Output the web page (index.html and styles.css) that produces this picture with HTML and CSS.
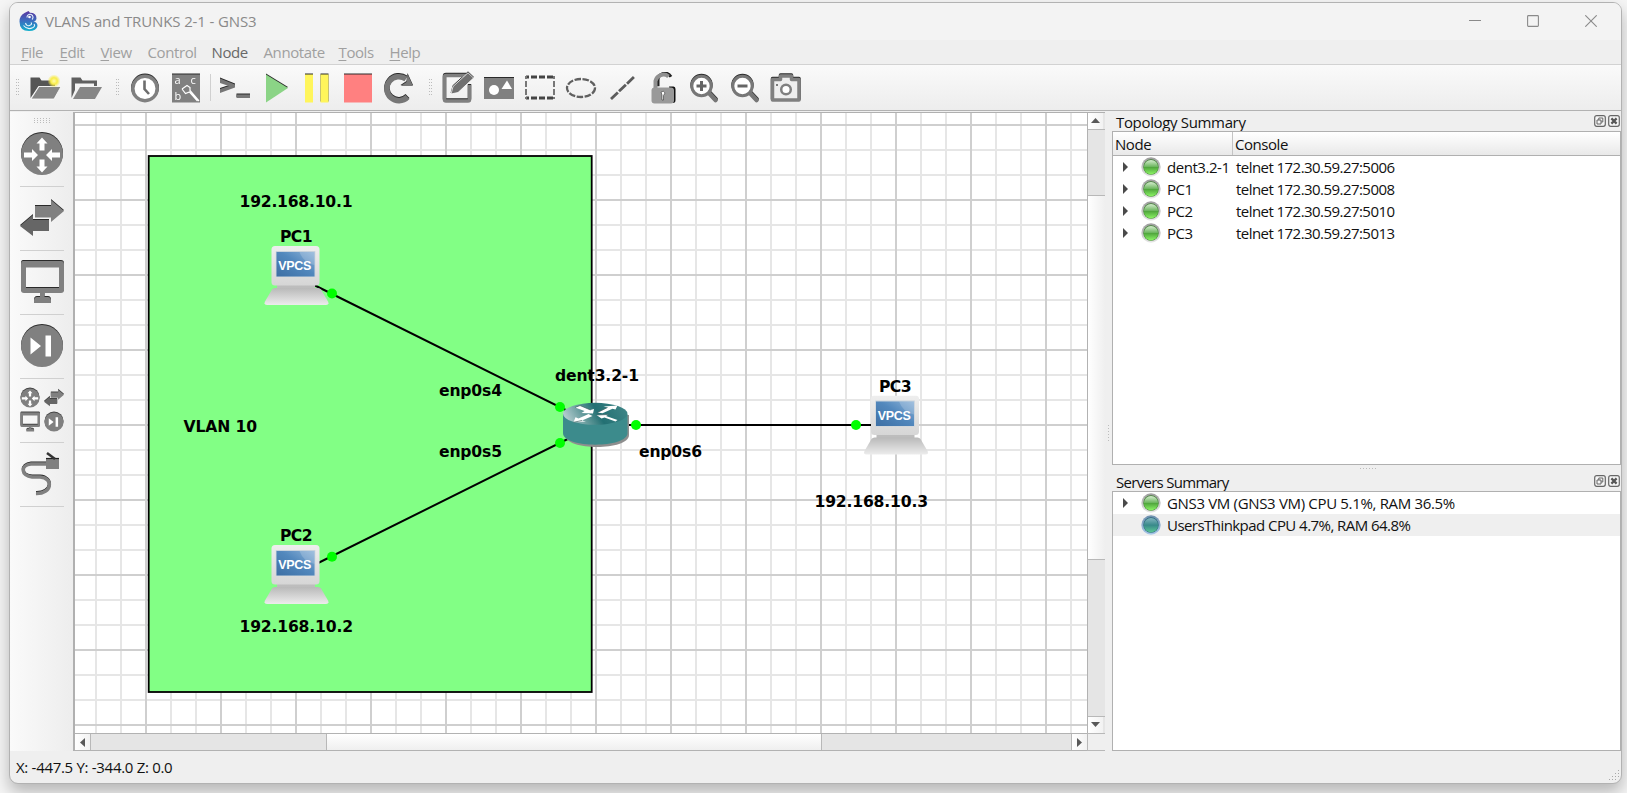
FILE: index.html
```html
<!DOCTYPE html>
<html lang="en">
<head>
<meta charset="utf-8">
<title>VLANS and TRUNKS 2-1 - GNS3</title>
<link rel="stylesheet" href="styles.css">
</head>
<body>
<svg class="defs" aria-hidden="true">
  <defs>
    <linearGradient id="case" x1="0" y1="0" x2="0" y2="1"><stop offset="0" stop-color="#eeeeee"/><stop offset="1" stop-color="#d6d6d6"/></linearGradient>
    <linearGradient id="base" x1="0" y1="0" x2="0" y2="1"><stop offset="0" stop-color="#b9b9b9"/><stop offset="1" stop-color="#ececec"/></linearGradient>
    <linearGradient id="screen" x1="0" y1="1" x2="1" y2="0"><stop offset="0" stop-color="#3d6fa4"/><stop offset=".55" stop-color="#5288bd"/><stop offset="1" stop-color="#8db3d8"/></linearGradient>
    <linearGradient id="lid" x1="0" y1=".6" x2="1" y2=".4"><stop offset="0" stop-color="#b9cfd2"/><stop offset=".4" stop-color="#4c8b8c"/><stop offset=".55" stop-color="#237073"/><stop offset="1" stop-color="#3e8486"/></linearGradient>
    <linearGradient id="green" x1="0" y1="0" x2="0" y2="1"><stop offset="0" stop-color="#d4ecce"/><stop offset=".45" stop-color="#70b862"/><stop offset=".5" stop-color="#4fa53c"/><stop offset="1" stop-color="#8df566"/></linearGradient>
    <linearGradient id="teal" x1="0" y1="0" x2="0" y2="1"><stop offset="0" stop-color="#83b5c0"/><stop offset=".5" stop-color="#38898a"/><stop offset="1" stop-color="#5cc795"/></linearGradient>
    <linearGradient id="ring" x1="0" y1="0" x2="0" y2="1"><stop offset="0" stop-color="#9c9c9c"/><stop offset="1" stop-color="#e9e9e9"/></linearGradient>
    <linearGradient id="bluering" x1="0" y1="0" x2="0" y2="1"><stop offset="0" stop-color="#6f90ae"/><stop offset="1" stop-color="#a8c8ea"/></linearGradient>
    <linearGradient id="logo" x1="0" y1="0" x2="0" y2="1"><stop offset="0" stop-color="#5b35a0"/><stop offset=".5" stop-color="#3b6fc0"/><stop offset="1" stop-color="#12b0cc"/></linearGradient>
    <radialGradient id="glow"><stop offset="0" stop-color="#fffbb0"/><stop offset=".5" stop-color="#f8ec48"/><stop offset="1" stop-color="#f8ec48" stop-opacity="0"/></radialGradient>
    <symbol id="s-router" viewBox="0 0 44 44"><circle cx="22" cy="22" r="21" fill="#808080"/><path fill="#fff" d="M22 5.500l5.500 6h-3v7h-5v-7h-3zM22 40.500l5.500-6h-3v-7h-5v7h-3zM18 23l-6-6v3.500H4v5h8V29zM26 23l6-6v3.500h8v5h-8V29z"/></symbol>
    <symbol id="s-switch" viewBox="0 0 44 44"><path fill="#808080" d="M15 10h16V4l13 11-13 11v-4.500H15z"/><path fill="#666" d="M29 24H13v-5L0 30l13 10v-5h16z"/></symbol>
    <symbol id="s-host" viewBox="0 0 44 44"><path fill="#808080" fill-rule="evenodd" d="M3 1h38q3 0 3 3v26q0 3-3 3H24.500v4H28q3 0 3 3.500V43H14v-2.500q0-3.500 3-3.500h3v-4H4q-3 0-3-3V4q0-3 2-3zM6 7.500V28h33V7.500z"/></symbol>
    <symbol id="s-next" viewBox="0 0 44 44"><circle cx="22" cy="22" r="21" fill="#808080"/><path fill="#fff" d="M10.500 13.500L21 22l-10.500 8.500zM25.500 11.500H31v21h-5.500z"/></symbol>
    <symbol id="s-pc" viewBox="0 0 66 60">
      <path d="M13 38h38v6H13z" fill="#bdbdbd"/>
      <path d="M11 42h43q2 0 3 1.500l7 12q1.500 3.500-2 3.500H3q-3.500 0-2-3.500l7-12q1-1.500 3-1.500z" fill="url(#base)"/>
      <rect x="7.500" y="0" width="48" height="39.500" rx="3.500" fill="url(#case)"/>
      <rect x="11.800" y="5" width="39.500" height="26" fill="#c9d3dc"/>
      <rect x="12.500" y="6" width="38" height="24.500" fill="url(#screen)"/>
      <path d="M35.500 6h15v13q-11-2-15-13z" fill="#fff" opacity=".18"/>
      <text class="vpcs" x="14.300" y="24" textLength="33">VPCS</text>
    </symbol>
    <symbol id="s-float" viewBox="0 0 12 12"><rect x=".7" y=".7" width="10.600" height="10.600" rx="2" fill="#f5f5f5" stroke="#666" stroke-width="1.200"/><path d="M4.800 5V3h4v4H7M3 5h4v4H3z" fill="none" stroke="#666"/></symbol>
    <symbol id="s-close" viewBox="0 0 12 12"><rect x=".7" y=".7" width="10.600" height="10.600" rx="2" fill="#f5f5f5" stroke="#666" stroke-width="1.200"/><path d="M3.400 3.400l5.200 5.200M8.600 3.400L3.400 8.600" stroke="#555" stroke-width="2.200"/></symbol>
    <symbol id="s-led" viewBox="0 0 20 20"><circle cx="10" cy="10" r="9.700" fill="url(#ring)"/><circle cx="10" cy="10" r="7.700" fill="#3d7d31"/><circle cx="10" cy="10.200" r="7.200" fill="url(#green)"/></symbol>
    <symbol id="s-led-blue" viewBox="0 0 20 20"><circle cx="10" cy="10" r="9.700" fill="url(#bluering)"/><circle cx="10" cy="10" r="7.700" fill="#266577"/><circle cx="10" cy="10.200" r="7.200" fill="url(#teal)"/></symbol>
    <pattern id="minor" x="95" y="124" width="25" height="25" patternUnits="userSpaceOnUse"><path d="M0 0h25v2H0zM0 0h2v25H0z" fill="#e6e6e6"/></pattern>
    <pattern id="major" x="145" y="124" width="75" height="75" patternUnits="userSpaceOnUse"><path d="M0 0h75v2H0zM0 0h2v75H0z" fill="#cfcfcf"/></pattern>
    <pattern id="dots-v" width="4" height="3" patternUnits="userSpaceOnUse"><path d="M0 0h1v1H0zM2 0h1v1H2z" fill="#bcbcbc"/></pattern>
    <pattern id="dots-h" width="3" height="2" patternUnits="userSpaceOnUse"><path d="M0 0h1v1H0z" fill="#bcbcbc"/></pattern>
  </defs>
</svg>

<div class="window">
  <header class="titlebar">
    <svg class="app-icon" viewBox="0 0 19 20"><path d="M9.500 0l1.500 1.800q6.500 0 6.500 5.700-.5 3-3 3 4 .5 4 4.500Q17.500 20 10 20 .5 20 .5 10.500q0-6 5-8.500z" fill="url(#logo)"/><path d="M8 6.500a3 3 0 1 1 5 2M6.500 12q1 3.500 4 2.500 3-1 1.500-3M4.500 14.500q4 5 9.500 2 2.500-1.500 1-3.500" fill="none" stroke="#e8f4fb" stroke-width="1.100"/><circle cx="10.500" cy="6" r="1.300" fill="#fff"/></svg>
    <span class="title">VLANS and TRUNKS 2-1 - GNS3</span>
    <div class="caption">
      <svg viewBox="0 0 12 12"><path d="M0 5.500h12"/></svg>
      <svg viewBox="0 0 12 12"><rect x=".6" y=".6" width="10.800" height="10.800" rx=".8"/></svg>
      <svg viewBox="0 0 12 12"><path d="M.3.300l11.400 11.400M11.700.3L.3 11.700"/></svg>
    </div>
  </header>
  <nav class="menubar">
    <span><u>F</u>ile</span><span><u>E</u>dit</span><span><u>V</u>iew</span><span>Control</span><span class="enabled">Node</span><span>Annotate</span><span><u>T</u>ools</span><span><u>H</u>elp</span>
  </nav>

  <div class="toolbar">
    <svg class="grip"><rect width="4" height="17" fill="url(#dots-v)"/></svg>
    <div class="group files">
      <svg viewBox="0 0 32 32"><path d="M1.500 26V5.500h9l2 3H26V14H9.500z" fill="#555"/><path d="M10 14.500h22L25 27H2z" fill="#868686" stroke="#fff" stroke-width=".8"/><circle cx="25" cy="9" r="6.500" fill="url(#glow)"/></svg>
      <svg viewBox="0 0 32 32"><path d="M1.500 26V5.500h9l2 3H27V14h-3v-2.500H5V18z" fill="#606060"/><path d="M10 15h22l-7 12H3z" fill="#868686"/></svg>
    </div>
    <svg class="grip"><rect width="4" height="17" fill="url(#dots-v)"/></svg>
    <div class="group">
      <svg class="bevel" viewBox="0 0 32 32"><circle cx="16" cy="16.500" r="12.200" fill="#fff" stroke="#808080" stroke-width="3.500"/><path d="M15.500 8.500V17l4.500 5" fill="none" stroke="#6d6d6d" stroke-width="2.600"/></svg>
      <svg class="bevel" viewBox="0 0 32 32"><rect x="2" y="2.500" width="28" height="28" fill="#808080"/><text class="letters" x="4.500" y="11.500">a</text><text class="letters" x="20.500" y="11.500">c</text><text class="letters" x="4.500" y="27.500">b</text><path d="M12 17l5-3.500 3 2v3l9 10.500M12 17l3.500 4.500 4-1.500 8 9" fill="none" stroke="#fff" stroke-width="1.200"/></svg>
    </div>
    <i class="rule"></i>
    <div class="group run">
      <svg class="bevel" viewBox="0 0 32 32"><path d="M1 6.500l15 6v3l-15 5.500v-4l9-3-9-3z" fill="#777"/><path d="M17.500 22.500H31v3.500H17.500z" fill="#777"/></svg>
      <svg class="bevel" viewBox="0 0 32 32"><path d="M6 2.500L28 16 6 30.500z" fill="#8bd486"/></svg>
      <svg class="bevel" viewBox="0 0 32 32"><path d="M4 2.500h8v28H4zM19.500 2.500h8v28h-8z" fill="#fff55b"/></svg>
      <svg class="bevel" viewBox="0 0 32 32"><path d="M2 2.500h28v28H2z" fill="#ff8080"/></svg>
      <svg class="bevel" viewBox="0 0 32 32"><path d="M24.500 25A12 12 0 1 1 23 7" fill="none" stroke="#777" stroke-width="5.500"/><path d="M24.500 2l5.500 12H17.500l6-4z" fill="#777"/></svg>
    </div>
    <svg class="grip"><rect width="4" height="17" fill="url(#dots-v)"/></svg>
    <div class="group">
      <svg class="bevel" viewBox="0 0 32 32"><path d="M24 3.500H4Q2.500 3.500 2.500 5v22.500q0 1.500 1.500 1.500h22q1.500 0 1.500-1.500V13" fill="none" stroke="#808080" stroke-width="3.500"/><path d="M9 22l2-7.500L26 .800l5.500 5.200L16 20.500z" fill="#707070" stroke="#fff" stroke-width=".8"/></svg>
      <svg class="bevel" viewBox="0 0 32 32"><path d="M1 6h30v21H1z" fill="#808080"/><circle cx="11" cy="18" r="5" fill="#fff"/><path d="M24 8.500l5 8.500H18.500z" fill="#fff"/></svg>
      <svg viewBox="0 0 32 32"><path d="M2 5h28M2 26h28" stroke="#444" stroke-width="3" stroke-dasharray="6 2" stroke-dashoffset="3" fill="none"/><path d="M2 4v23M30 4v23" stroke="#777" stroke-width="2" stroke-dasharray="6 2" stroke-dashoffset="3" fill="none"/></svg>
      <svg viewBox="0 0 32 32"><ellipse cx="16" cy="16" rx="14" ry="9" fill="none" stroke="#606060" stroke-width="2.300" stroke-dasharray="6.500 1.500"/></svg>
      <svg viewBox="0 0 32 32"><path d="M5 27L28 5" stroke="#5c5c5c" stroke-width="2.800" stroke-dasharray="9.500 1.600"/></svg>
      <svg viewBox="0 0 32 32"><path d="M10 15V9a7 7 0 0 1 13-3.500" fill="none" stroke="#222" stroke-width="3" transform="translate(1 -.8)"/><path d="M8.500 17V9a8 8 0 0 1 13-4.500" fill="none" stroke="#909090" stroke-width="4"/><path d="M22 14.500h4.500q2 0 2 2.500v11q0 3-2.500 3z" fill="#111"/><rect x="4.500" y="15.500" width="22.500" height="16" rx="3" fill="#999"/><path d="M14 20q3-2 4 1l-1.500 2.500v4.500h-1.500v-5z" fill="#fff" stroke="#333" stroke-width=".6"/></svg>
      <svg class="bevel" viewBox="0 0 32 32"><path d="M20 20l7.500 8" stroke="#777" stroke-width="4.500" stroke-linecap="round"/><circle cx="13.500" cy="14" r="9.700" fill="#fff" stroke="#777" stroke-width="3"/><path d="M8.500 14h10M13.500 9v10" stroke="#666" stroke-width="3"/></svg>
      <svg class="bevel" viewBox="0 0 32 32"><path d="M20 20l7.500 8" stroke="#777" stroke-width="4.500" stroke-linecap="round"/><circle cx="13.500" cy="14" r="9.700" fill="#fff" stroke="#777" stroke-width="3"/><path d="M8.500 14h10" stroke="#666" stroke-width="3"/></svg>
      <svg class="bevel" viewBox="0 0 32 32"><path d="M10.500 7.500V4h11v3.500H29v20.500H2.500V7.500z" fill="#eee" stroke="#808080" stroke-width="3.500" stroke-linejoin="round"/><circle cx="16" cy="17.500" r="4.800" fill="#fff" stroke="#808080" stroke-width="2.500"/><circle cx="7" cy="13" r="1" fill="#555"/></svg>
    </div>
  </div>

  <main class="workspace">
    <aside class="devices">
      <svg class="grip wide"><rect width="17" height="5" fill="url(#dots-h)"/></svg>
      <div class="device"><svg class="bevel"><use href="#s-router"/></svg></div>
      <div class="device"><svg class="bevel"><use href="#s-switch"/></svg></div>
      <div class="device"><svg class="bevel"><use href="#s-host"/></svg></div>
      <div class="device"><svg class="bevel"><use href="#s-next"/></svg></div>
      <div class="device all"><svg class="thin"><use href="#s-router"/></svg><svg class="thin"><use href="#s-switch"/></svg><svg class="thin"><use href="#s-host"/></svg><svg class="thin"><use href="#s-next"/></svg></div>
      <div class="device"><svg viewBox="0 0 44 44"><path d="M27 12H11C0 13 1 24 12 25h8c14 1 12 17-4 16.500" fill="none" stroke="#222" stroke-width="3" transform="translate(0 -1)"/><path d="M27 12H11C0 13 1 24 12 25h8c14 1 12 17-4 16.500" fill="none" stroke="#808080" stroke-width="3.500"/><path d="M26 6.500h13V17H26z" fill="#808080"/><path d="M26 6.500h13" stroke="#222" stroke-width="1.200"/><path d="M27 1l8 6" stroke="#333" stroke-width="2.500"/></svg></div>
    </aside>

    <section class="view">
      <svg class="canvas" viewBox="75 113 1012 620">
        <rect x="75" y="113" width="1012" height="620" fill="#fff"/>
        <rect x="75" y="113" width="1012" height="620" fill="url(#minor)"/>
        <rect x="75" y="113" width="1012" height="620" fill="url(#major)"/>
        <rect x="148.700" y="156" width="443" height="536" fill="#82ff85" stroke="#000" stroke-width="1.800"/>
        <path d="M296 276L596 425M296 574L596 425M596 425H896" stroke="#000" stroke-width="2"/>
        <g fill="#00ff00"><circle cx="332" cy="293.500" r="5"/><circle cx="560" cy="407" r="5"/><circle cx="332" cy="556.700" r="5"/><circle cx="560" cy="443" r="5"/><circle cx="636" cy="425" r="5"/><circle cx="856" cy="425" r="5"/></g>
        <use href="#s-pc" x="264" y="246" width="66" height="60"/>
        <use href="#s-pc" x="264" y="545" width="66" height="60"/>
        <use href="#s-pc" x="863.500" y="395.500" width="66" height="60"/>
        <g>
          <path d="M565 415v20c0 16 64 16 64 0v-20z" fill="#8e8e8e"/>
          <path d="M563 414v19c0 15.500 64.500 15.500 64.500 0v-19z" fill="#3c8b8c"/>
          <ellipse cx="595.200" cy="413.800" rx="32.200" ry="11" fill="url(#lid)"/>
          <path d="M575 407.500l5-2 10.500 4.500 3.500-1-1 4.500-11.500-.5 3-2zM597.500 412.500l10-5-4-1 14-1-2 4-3-.7-10 4.500zM592.500 416l-10.500 4.500 4 1-12.500.8 2-5 3 1.200 10-4.500zM615.500 421.500l-11-4-3 1-5-3.500 12-.5-2.500 1.500 11.500 4z" fill="#fff"/>
          <path d="M575 407.500l5-2 10.500 4.500M597.500 412.500l10-5M582 420.500l-8.500 1.800M596.500 415l12-.5" fill="none" stroke="#3a5f60" stroke-width=".7"/>
        </g>
        <g class="labels">
          <text x="239.500" y="206.500" textLength="113">192.168.10.1</text>
          <text x="280" y="242" textLength="32.500">PC1</text>
          <text x="183.500" y="431.500" textLength="73.500">VLAN 10</text>
          <text x="439" y="395.500" textLength="63">enp0s4</text>
          <text x="555" y="380.500" textLength="84">dent3.2-1</text>
          <text x="439" y="456.500" textLength="63">enp0s5</text>
          <text x="639" y="456.500" textLength="63">enp0s6</text>
          <text x="280" y="541" textLength="32.500">PC2</text>
          <text x="239.500" y="631.500" textLength="113.500">192.168.10.2</text>
          <text x="879" y="391.500" textLength="32.500">PC3</text>
          <text x="814.500" y="506.500" textLength="113.500">192.168.10.3</text>
        </g>
      </svg>
      <div class="vscroll"><b><svg viewBox="0 0 9 5"><path d="M0 5L4.500 0 9 5z"/></svg></b><i class="v-before"></i><i class="thumb"></i><i class="v-after"></i><b><svg viewBox="0 0 9 5"><path d="M0 0l4.500 5L9 0z"/></svg></b></div>
      <div class="hscroll"><b><svg viewBox="0 0 5 9"><path d="M5 0L0 4.500 5 9z"/></svg></b><i class="h-before"></i><i class="thumb"></i><i class="h-after"></i><b><svg viewBox="0 0 5 9"><path d="M0 0l5 4.500L0 9z"/></svg></b></div>
      <div class="corner"></div>
    </section>

    <div class="splitter"><svg class="dots-col"><rect width="1" height="16" fill="url(#dots-v)"/></svg></div>

    <aside class="docks">
      <div class="dock-title"><span class="t-topology">Topology Summary</span><svg><use href="#s-float"/></svg><svg><use href="#s-close"/></svg></div>
      <div class="list topology">
        <div class="thead"><span>Node</span><span>Console</span></div>
        <div class="row"><svg class="arrow" viewBox="0 0 5 10"><path d="M0 0l5 5-5 5z"/></svg><svg class="led"><use href="#s-led"/></svg><span class="name">dent3.2-1</span><span class="console">telnet 172.30.59.27:5006</span></div>
        <div class="row"><svg class="arrow" viewBox="0 0 5 10"><path d="M0 0l5 5-5 5z"/></svg><svg class="led"><use href="#s-led"/></svg><span class="name">PC1</span><span class="console">telnet 172.30.59.27:5008</span></div>
        <div class="row"><svg class="arrow" viewBox="0 0 5 10"><path d="M0 0l5 5-5 5z"/></svg><svg class="led"><use href="#s-led"/></svg><span class="name">PC2</span><span class="console">telnet 172.30.59.27:5010</span></div>
        <div class="row"><svg class="arrow" viewBox="0 0 5 10"><path d="M0 0l5 5-5 5z"/></svg><svg class="led"><use href="#s-led"/></svg><span class="name">PC3</span><span class="console">telnet 172.30.59.27:5013</span></div>
      </div>
      <div class="hsplit"><svg class="dots-row"><rect width="16" height="1" fill="url(#dots-h)"/></svg></div>
      <div class="dock-title"><span class="t-servers">Servers Summary</span><svg><use href="#s-float"/></svg><svg><use href="#s-close"/></svg></div>
      <div class="list servers">
        <div class="row"><svg class="arrow" viewBox="0 0 5 10"><path d="M0 0l5 5-5 5z"/></svg><svg class="led"><use href="#s-led"/></svg><span class="vm">GNS3 VM (GNS3 VM) CPU 5.1%, RAM 36.5%</span></div>
        <div class="row alt"><svg class="arrow" viewBox="0 0 5 10"></svg><svg class="led"><use href="#s-led-blue"/></svg><span class="console">UsersThinkpad CPU 4.7%, RAM 64.8%</span></div>
      </div>
    </aside>
  </main>

  <footer class="statusbar"><span>X: -447.5 Y: -344.0 Z: 0.0</span><svg class="size-grip" viewBox="0 0 11 11"><path d="M9 0h1v1H9zM6 3h1v1H6zM9 3h1v1H9zM3 6h1v1H3zM6 6h1v1H6zM9 6h1v1H9zM0 9h1v1H0zM3 9h1v1H3zM6 9h1v1H6z" fill="#a8a8a8"/></svg></footer>
</div>
</body>
</html>
```

FILE: styles.css
```css
* { box-sizing: border-box; }

body {
  margin: 0;
  width: 1627px;
  height: 793px;
  padding: 2px 5px 9px 9px;
  overflow: hidden;
  background: #f5f5f5;
  font: 15px/20px "Open Sans", "Noto Sans", sans-serif;
  letter-spacing: -0.45px;
  color: #111;
}

svg { display: block; flex: none; }
.defs { position: absolute; width: 0; height: 0; }

.window {
  display: flex;
  flex-direction: column;
  width: 1613px;
  height: 782px;
  border: 1px solid #b2b2b2;
  border-radius: 9px;
  overflow: hidden;
  background: #efefef;
  box-shadow: 0 8px 16px rgba(0, 0, 0, .26);
}

/* title bar and menu */
.titlebar {
  display: flex;
  align-items: center;
  height: 37px;
  padding: 0 24px 1px 9px;
  background: #f3f3f3;
}
.app-icon { width: 19px; height: 20px; }
.title { margin-left: 7px; color: #8a8a8a; letter-spacing: -0.13px; }
.caption { display: flex; gap: 46px; margin-left: auto; }
.caption svg { width: 12px; height: 12px; fill: none; stroke: #8a8a8a; stroke-width: 1.1; }

.menubar {
  display: grid;
  grid-template-columns: 38.5px 41px 47px 64px 52px 75px 51px 40px;
  height: 25px;
  padding: 2px 0 0 11px;
  border-bottom: 1px solid #d2d2d2;
  color: #a0a0a0;
  letter-spacing: -0.4px;
}
.menubar u { text-underline-offset: 2px; text-decoration-thickness: 1px; }
.menubar .enabled { color: #686868; }

/* main toolbar */
.toolbar {
  display: flex;
  align-items: center;
  height: 46px;
  padding-left: 6px;
  background: linear-gradient(#fafafa, #ededed);
  border-bottom: 1px solid #b2b2b2;
}
.group { display: flex; gap: 9px; margin: 0 13px 0 9px; }
.group svg { width: 32px; height: 32px; }
.group.files { margin-right: 14px; }
.group.run { margin-right: 14px; }
.bevel { filter: drop-shadow(0 -1px 0 #2a2a2a); }
.thin { filter: drop-shadow(0 -.5px 0 #444); }
.grip { width: 4px; height: 17px; }
.rule { width: 1px; height: 27px; margin-left: -5px; margin-right: -1px; background: #d0d0d0; }
.letters { font: 11px "Open Sans", sans-serif; fill: #fff; }

/* workspace */
.workspace {
  display: grid;
  grid-template-columns: 63px 1032px 7px 509px;
  height: 640px;
  padding-top: 1px;
}
.devices {
  display: flex;
  flex-direction: column;
  align-items: center;
  padding-top: 6px;
  background: linear-gradient(90deg, #fafafa, #ededed);
}
.grip.wide { width: 17px; height: 5px; margin-left: 2px; }
.device {
  width: 44px;
  height: 64px;
  padding: 9px 0 10px;
  border-bottom: 1px solid #d0d0d0;
}
.device > svg { width: 44px; height: 44px; overflow: visible; }
.device.all { display: grid; grid-template-columns: 20px 20px; gap: 4px; }
.device.all > svg { width: 20px; height: 20px; }

.view {
  display: grid;
  grid-template: 620px 18px / 1012px 18px;
  border: 1px solid #b0b0b0;
  border-left-width: 2px;
  border-bottom: 0;
}
.canvas { width: 1012px; height: 620px; }
.labels text { font: bold 15.6px "DejaVu Sans", sans-serif; letter-spacing: 0; }
.vpcs { font: bold 12.5px "Liberation Sans", sans-serif; letter-spacing: 0; fill: #fff; }

.vscroll, .hscroll { display: flex; background: #e5e5e5; border: 0 solid #b2b2b2; }
.vscroll { flex-direction: column; border-left-width: 1px; }
.hscroll { border-top-width: 1px; border-bottom-width: 1px; }
.vscroll b, .hscroll b {
  display: flex;
  align-items: center;
  justify-content: center;
  width: 16px;
  height: 16px;
  background: linear-gradient(90deg, #fff, #f2f2f2);
}
.vscroll b { width: 15px; }
.hscroll b { width: 15px; }
.vscroll b svg { width: 9px; height: 5px; margin-top: -1px; fill: #585858; }
.hscroll b svg { width: 5px; height: 9px; fill: #585858; }
.thumb { flex: 1; background: linear-gradient(90deg, #fff, #efefef); }
.hscroll .thumb { background: linear-gradient(#fff, #efefef); }
.v-before { height: 67px; border: solid #b8b8b8; border-width: 1px 0; }
.v-after { height: 158px; border: solid #b8b8b8; border-width: 1px 0; }
.h-before { width: 237px; border: solid #b8b8b8; border-width: 0 1px; }
.h-after { width: 251px; border: solid #b8b8b8; border-width: 0 1px; }
.corner { border: solid #b8b8b8; border-width: 1px 0 1px 1px; background: #efefef; }

.splitter { display: flex; align-items: center; justify-content: center; }
.dots-col { width: 1px; height: 16px; margin-top: 3px; }
.dots-row { width: 16px; height: 1px; margin-left: 3px; }

/* docks */
.docks { display: flex; flex-direction: column; }
.dock-title {
  display: flex;
  align-items: center;
  gap: 2px;
  height: 19px;
  padding: 0 1px 0 4px;
}
.dock-title span { flex: 1; }
.dock-title svg { width: 12px; height: 12px; margin-top: -1px; }
.t-topology { letter-spacing: -0.34px; }
.t-servers { letter-spacing: -0.7px; }
.list { border: 1px solid #b0b0b0; background: #fff; }
.topology { height: 334px; }
.servers { height: 260px; }
.thead {
  display: grid;
  grid-template-columns: 120px 1fr;
  height: 24px;
  background: linear-gradient(#fff, #e9e9e9);
  border-bottom: 1px solid #b0b0b0;
}
.thead span { padding: 2px 0 0 2px; }
.thead span:first-child { border-right: 1px solid #c4c4c4; }
.row { display: flex; align-items: center; height: 22px; padding-left: 10px; white-space: nowrap; }
.alt { background: #efefef; }
.arrow { width: 5px; height: 10px; margin-right: 13px; fill: #4a4a4a; }
.led { width: 20px; height: 20px; margin-right: 6px; margin-top: -1px; }
.name { width: 69px; }
.console { letter-spacing: -0.55px; }
.vm { letter-spacing: -0.33px; }
.hsplit { display: flex; align-items: center; justify-content: center; height: 7px; }

/* status bar */
.statusbar {
  display: flex;
  align-items: center;
  justify-content: space-between;
  height: 32px;
  padding: 0 1px 1px 6px;
  letter-spacing: -0.3px;
}
.size-grip {
  align-self: flex-end;
  width: 11px;
  height: 11px;
  margin-bottom: 1px;
}
```
